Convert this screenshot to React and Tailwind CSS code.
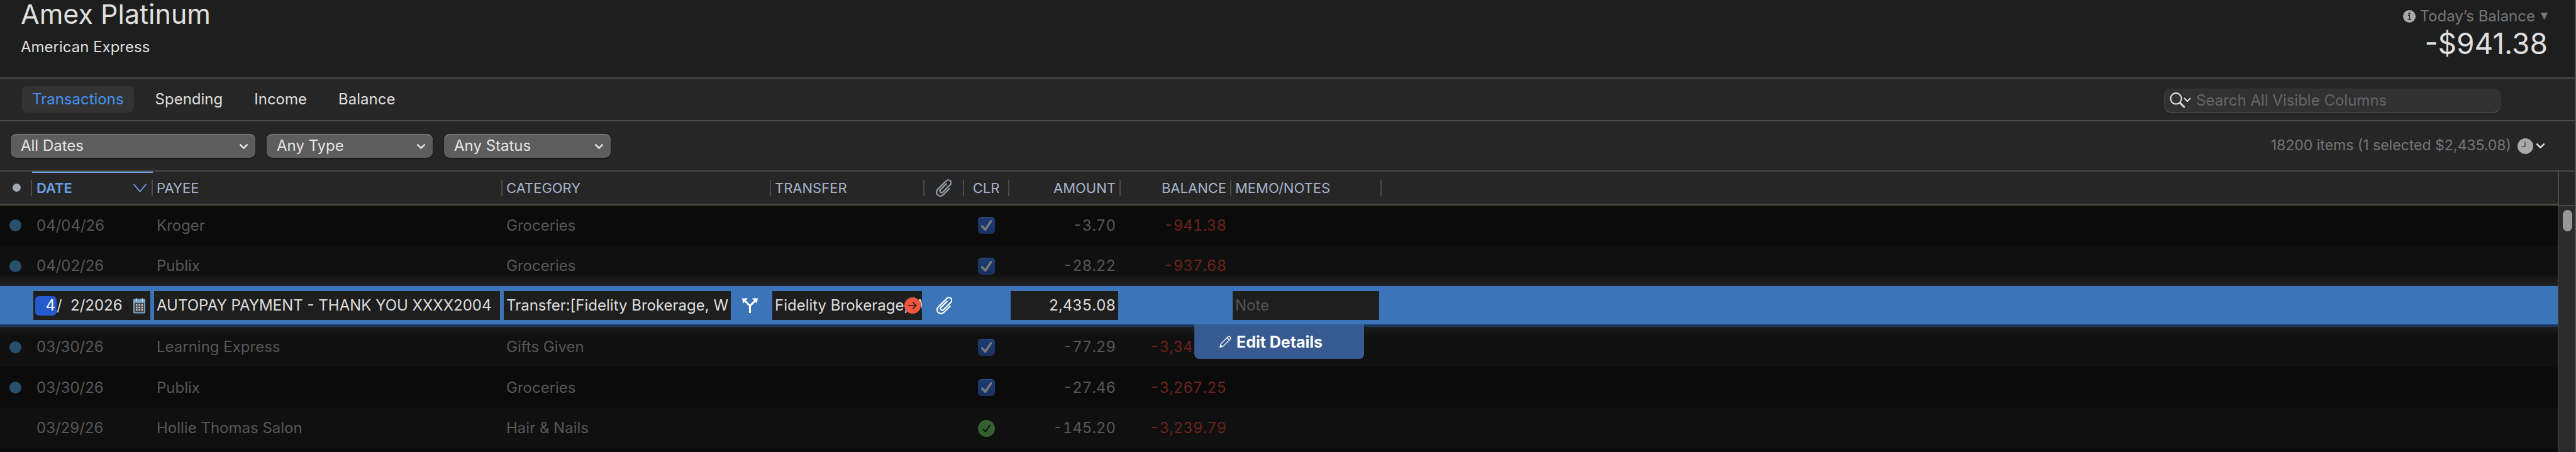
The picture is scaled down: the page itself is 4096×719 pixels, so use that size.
import { useState } from "react";

const tabs = ["Transactions", "Spending", "Income", "Balance"];

const transactions = [
  { id: 1, unread: true, date: "04/04/26", payee: "Kroger", category: "Groceries", status: "cleared", amount: "-3.70", balance: "-941.38", bg: "h-[65px] bg-[#0b0b0b] shadow-[inset_0_2px_0_#2e3620]" },
  { id: 2, unread: true, date: "04/02/26", payee: "Publix", category: "Groceries", status: "cleared", amount: "-28.22", balance: "-937.68", bg: "h-[64px] bg-[linear-gradient(to_top,#232323,#101010_20px)]" },
  { id: 3, editing: true },
  { id: 4, unread: true, date: "03/30/26", payee: "Learning Express", category: "Gifts Given", status: "cleared", amount: "-77.29", balance: "-3,344.71", bg: "h-[64px] bg-[linear-gradient(to_bottom,#1d1d1d,#101010_14px)]" },
  { id: 5, unread: true, date: "03/30/26", payee: "Publix", category: "Groceries", status: "cleared", amount: "-27.46", balance: "-3,267.25", bg: "h-[65px] bg-[#0b0b0b]" },
  { id: 6, unread: false, date: "03/29/26", payee: "Hollie Thomas Salon", category: "Hair & Nails", status: "reconciled", amount: "-145.20", balance: "-3,239.79", bg: "h-[64px] bg-[#101010]" },
];

function Chevron({ className }) {
  return (
    <svg viewBox="0 0 14 9" className={className} fill="none" stroke="currentColor" strokeWidth="2.4" strokeLinecap="round" strokeLinejoin="round">
      <path d="M2 2 L7 7 L12 2" />
    </svg>
  );
}

function ClipIcon({ className }) {
  return (
    <svg viewBox="0 0 26 29" className={className} fill="none" stroke="currentColor" strokeWidth="2.3" strokeLinecap="round" strokeLinejoin="round">
      <path d="M22.5 15.5 L12 26 A6.36 6.36 0 0 1 3 17 L17.5 2.5 A4.6 4.6 0 0 1 24 9 L11.5 21.5 A2.83 2.83 0 0 1 7.5 17.5 L17.5 7.5" />
    </svg>
  );
}

function CalendarIcon() {
  return (
    <svg viewBox="0 0 20 26" className="w-[19px] h-[25px]">
      <rect x="0" y="1.5" width="20" height="24" rx="1.5" fill="#7aa6c6" />
      <rect x="2" y="8" width="16" height="15.5" fill="#4a4a4a" />
      <rect x="4.4" y="0" width="1.4" height="6" fill="#d8d8d8" />
      <rect x="14.4" y="0" width="1.4" height="6" fill="#d8d8d8" />
      {[11, 15, 19].map((y) =>
        [4.4, 8.9, 13.4].map((x) => (
          <rect key={`${x}-${y}`} x={x} y={y - 0.5} width="2.4" height="2.4" fill="#e2e2e2" />
        ))
      )}
    </svg>
  );
}

function Select({ label, options, className }) {
  return (
    <div className={`relative ${className}`}>
      <select
        aria-label={label}
        className="w-full h-[38px] pl-4 pr-10 appearance-none rounded-[9px] bg-[#5d5d5d] text-[#e6e6e6] text-[24px] leading-[36px] shadow-[inset_0_2px_0_#747474,0_1px_2px_#111111]"
      >
        {options.map((each) => (
          <option key={each}>{each}</option>
        ))}
      </select>
      <Chevron className="absolute right-[11px] top-[15px] w-[15px] h-[10px] text-[#e6e6e6] pointer-events-none" />
    </div>
  );
}

function HeaderCell({ children, className = "font-normal", inner = "" }) {
  return (
    <th scope="col" className={`p-0 h-[53px] ${className}`}>
      <div className={`flex items-center h-[26px] border-r-2 border-[#4a4a4a] ${inner}`}>{children}</div>
    </th>
  );
}

function StatusCell({ status }) {
  const [checked, setChecked] = useState(true);
  const reconciled = status === "reconciled";
  return (
    <div className="relative mx-auto w-[27px] h-[27px]">
      <input
        type="checkbox"
        aria-label={status}
        checked={checked}
        onChange={(e) => setChecked(e.target.checked)}
        className={`block w-full h-full appearance-none ${
          reconciled
            ? "rounded-full bg-[#36602f]"
            : "rounded-[6px] bg-linear-to-b from-[#1c3c72] to-[#183160] shadow-[inset_0_1px_0_#34527f]"
        }`}
      />
      {checked && (
        <svg viewBox="0 0 28 28" className="absolute inset-0 w-full h-full pointer-events-none" fill="none" strokeLinecap="round" strokeLinejoin="round">
          {reconciled ? (
            <path d="M9 15.5 L12.5 19.5 L19.5 9" stroke="#101510" strokeWidth="2.2" />
          ) : (
            <path d="M7 15.5 L12.2 21 L21.5 7" stroke="#7b7b7b" strokeWidth="3.6" />
          )}
        </svg>
      )}
    </div>
  );
}

function TransactionRow({ row }) {
  return (
    <tr className={row.bg}>
      <td className="p-0 pl-[15px]">
        {row.unread && <span className="block w-[19px] h-[19px] rounded-full bg-[#284f6b]" />}
      </td>
      <td className="p-0 pl-[7px]">{row.date}</td>
      <td className="p-0 pl-[6px]">{row.payee}</td>
      <td className="p-0 pl-[6px]">{row.category}</td>
      <td className="p-0" />
      <td className="p-0" />
      <td className="p-0 pr-[2px]">
        <StatusCell status={row.status} />
      </td>
      <td className="p-0 pr-[8px] text-right tabular-nums">{row.amount}</td>
      <td className="p-0 pr-[8px] text-right tabular-nums text-[#6b231b]">{row.balance}</td>
      <td className="p-0" />
      <td className="p-0" />
    </tr>
  );
}

function EditingRow() {
  const field = "block w-full h-[46px] pb-[1px] bg-[#1e1e1e] text-[#dedede] outline-none";
  return (
    <tr className="h-[65px] bg-[linear-gradient(to_top,#1c3461_4px,#3b74b8_4px)]">
      <td className="p-0" />
      <td className="p-0 pt-[8px] pl-[2px] pr-[4px] align-top">
        <div className="flex items-center h-[46px] pl-[3px] pr-[8px] bg-[#1e1e1e] text-[#dedede]">
          <input aria-label="Month" defaultValue="4" className="w-[34px] h-[31px] pr-[2px] rounded-[6px] bg-[#245acb] text-right text-white outline-none" />
          <span>/</span>
          <input aria-label="Day" defaultValue="2" className="w-[28px] text-right outline-none" />
          <span>/</span>
          <input aria-label="Year" defaultValue="2026" className="w-[64px] outline-none" />
          <button aria-label="Open calendar" className="ml-auto">
            <CalendarIcon />
          </button>
        </div>
      </td>
      <td className="p-0 pt-[8px] pl-[2px] pr-[4px] align-top">
        <input aria-label="Payee" defaultValue="AUTOPAY PAYMENT - THANK YOU XXXX2004" className={`${field} pl-[4px]`} />
      </td>
      <td className="p-0 pt-[8px] pl-[2px] align-top">
        <div className="flex items-center">
          <input aria-label="Category" defaultValue="Transfer:[Fidelity Brokerage, W" className={`${field} flex-1 min-w-0 pl-[4px]`} />
          <button aria-label="Split" className="flex justify-center w-[64px] pr-[3px] text-white">
            <svg viewBox="0 0 26 25" className="w-[25px] h-[24px]">
              <path d="M0 0.5 L9.5 0.5 L1.5 9 Z M26 0.5 L16.5 0.5 L24.5 9 Z" fill="currentColor" />
              <path d="M4 4 L13 13 L22 4 M13 12 V25" fill="none" stroke="currentColor" strokeWidth="3.2" />
            </svg>
          </button>
        </div>
      </td>
      <td className="p-0 pt-[8px] pl-[2px] pr-[4px] align-top">
        <div className="relative">
          <input aria-label="Transfer" defaultValue="Fidelity Brokerage, W" className={`${field} pl-[4px]`} />
          <button aria-label="Go to transfer" className="absolute right-[2px] top-[10px]">
            <svg viewBox="0 0 27 27" className="w-[26px] h-[26px]" fill="none">
              <circle cx="13.5" cy="13.5" r="13.5" fill="#ee553e" />
              <path d="M7 13.5 H19.5 M14.5 8.5 L19.5 13.5 L14.5 18.5" stroke="#2a1a18" strokeWidth="1.7" strokeLinecap="round" strokeLinejoin="round" />
            </svg>
          </button>
        </div>
      </td>
      <td className="p-0 pb-[4px]">
        <button aria-label="Attachments" className="block mx-auto text-white">
          <ClipIcon className="w-[25px] h-[28px]" />
        </button>
      </td>
      <td className="p-0" />
      <td className="p-0 pt-[8px] pl-[2px] pr-[4px] align-top">
        <input aria-label="Amount" defaultValue="2,435.08" className={`${field} pr-[4px] text-right tabular-nums`} />
      </td>
      <td className="p-0" />
      <td className="relative p-0 pt-[8px] pl-[2px] pr-[4px] align-top">
        <input aria-label="Note" placeholder="Note" className={`${field} pl-[4px] placeholder:text-[#545454]`} />
        {/* hangs below the row, over the next one */}
        <button className="absolute right-[28px] top-[61px] z-10 flex items-center gap-[8px] w-[270px] h-[55px] pl-[40px] rounded-b-[8px] bg-[#375a90] text-white text-[25px] font-bold whitespace-nowrap">
          <svg viewBox="0 0 20 20" className="w-[19px] h-[19px]" fill="none" stroke="currentColor" strokeWidth="1.4" strokeLinejoin="round">
            <path d="M1 19 L2.5 13.5 L14.5 1.5 Q16 0.5 17.5 2 L18.2 2.7 Q19.5 4.2 18.2 5.5 L6.5 17.5 Z M12.8 3.2 L16.7 7.2" />
            <path d="M1 19 L2 15.5 L4.5 18 Z" fill="currentColor" />
          </svg>
          Edit Details
        </button>
      </td>
      <td className="p-0" />
    </tr>
  );
}

function App() {
  const [activeTab, setActiveTab] = useState("Transactions");

  return (
    <div className="flex flex-col w-full h-screen overflow-hidden border-r-2 border-[#555555] bg-[#262626] text-[#dfdfdf] text-[24px] leading-[32px] font-['Inter',sans-serif]">
      <header className="flex justify-between h-[125px] pl-[33px] pr-[43px] bg-[#1e1e1e] border-b-2 border-[#4a4a4a]">
        <div>
          <h1 className="text-[43px] leading-[44px]">Amex Platinum</h1>
          <p className="mt-[15px]">American Express</p>
        </div>
        <div className="flex flex-col items-end pt-[10px]">
          <button className="flex items-center text-[#777777]">
            <svg viewBox="0 0 21 21" className="w-[20px] h-[20px] mr-[6px]" fill="none">
              <circle cx="10.5" cy="10.5" r="10.5" fill="#a9a9a9" />
              <circle cx="10.5" cy="5.7" r="1.5" fill="#1e1e1e" />
              <path d="M8.3 9 H11 V15.5 M8 15.5 H13.5" stroke="#1e1e1e" strokeWidth="1.6" />
            </svg>
            Today’s Balance
            <svg viewBox="0 0 11 12" className="w-[11px] h-[12px] ml-[9px]">
              <path d="M0 0 H11 L5.5 12 Z" fill="currentColor" />
            </svg>
          </button>
          <p className="text-[46px] leading-[54px]">-$941.38</p>
        </div>
      </header>

      <nav className="flex items-center justify-between h-[68px] pl-[35px] pr-[118px] border-b-2 border-[#4a4a4a]">
        <div className="flex gap-[18px]">
          {tabs.map((tab) => (
            <button
              key={tab}
              onClick={() => setActiveTab(tab)}
              className={`h-[42px] px-4 rounded-[8px] ${
                activeTab === tab ? "bg-[#333333] text-[#4592f5]" : "text-[#dfdfdf]"
              }`}
            >
              {tab}
            </button>
          ))}
        </div>
        <label className="flex items-center w-[535px] h-[38px] mt-[3px] pl-[8px] rounded-[10px] border border-[#3d3d3d] border-b-[#5c5c5c] bg-[#313131]">
          <svg viewBox="0 0 35 26" className="w-[34px] h-[25px] mr-[8px] shrink-0" fill="none" stroke="#e4e4e4" strokeLinecap="round" strokeLinejoin="round">
            <circle cx="10.2" cy="10.2" r="9" strokeWidth="2.2" />
            <path d="M17 17.5 L23.5 24" strokeWidth="3" />
            <path d="M24.5 10 L29 14.8 L33.5 10" strokeWidth="2.2" />
          </svg>
          <input
            type="search"
            aria-label="Search"
            placeholder="Search All Visible Columns"
            className="flex-1 min-w-0 outline-none placeholder:text-[#666666]"
          />
        </label>
      </nav>

      <div className="flex items-center justify-between h-[80px] pl-[17px] pr-[47px] border-b-2 border-[#4a4a4a]">
        <div className="flex gap-[18px]">
          <Select label="Dates" options={["All Dates"]} className="w-[389px]" />
          <Select label="Type" options={["Any Type"]} className="w-[264px]" />
          <Select label="Status" options={["Any Status"]} className="w-[265px]" />
        </div>
        <div className="flex items-center">
          <span className="text-[23px] text-[#767676] pb-[2px]">18200 items (1 selected $2,435.08)</span>
          <button aria-label="Scheduled" className="flex items-center ml-[10px]">
            <svg viewBox="0 0 26 26" className="w-[25px] h-[25px]" fill="none">
              <circle cx="13" cy="13" r="13" fill="#a9a9a9" />
              <path d="M12.5 5.5 V13.7 H6.5" stroke="#3a3a3a" strokeWidth="1.4" />
            </svg>
            <Chevron className="ml-[4px] w-[15px] h-[10px] text-[#e6e6e6]" />
          </button>
        </div>
      </div>

      <div className="flex flex-1 min-h-0">
        <div className="flex-1 min-w-0 overflow-hidden bg-[#0b0b0b]">
          <table className="w-full table-fixed border-separate border-spacing-0 text-left text-[#575757] whitespace-nowrap">
            <colgroup>
              <col className="w-[51px]" />
              <col className="w-[192px]" />
              <col className="w-[556px]" />
              <col className="w-[427px]" />
              <col className="w-[244px]" />
              <col className="w-[63px]" />
              <col className="w-[72px]" />
              <col className="w-[177px]" />
              <col className="w-[176px]" />
              <col className="w-[239px]" />
              <col />
            </colgroup>
            <thead>
              <tr className="bg-[#262626] text-[22px] text-[#a5b4cc] [&>th]:border-b-2 [&>th]:border-[#4a4a4a]">
                <HeaderCell inner="pl-[20px]">
                  <span className="w-[13px] h-[13px] rounded-full bg-[#a3a9b3]" />
                </HeaderCell>
                <HeaderCell className="font-semibold shadow-[inset_0_2px_0_#6a9fe4]" inner="pl-[7px] pr-[8px] justify-between text-[#6a9fe4]">
                  DATE
                  <svg viewBox="0 0 22 14" className="w-[21px] h-[14px]" fill="none" stroke="currentColor" strokeWidth="1.8">
                    <path d="M0.8 0.8 L11 13 L21.2 0.8" />
                  </svg>
                </HeaderCell>
                <HeaderCell inner="pl-[6px]">PAYEE</HeaderCell>
                <HeaderCell inner="pl-[6px]">CATEGORY</HeaderCell>
                <HeaderCell inner="pl-[6px]">TRANSFER</HeaderCell>
                <HeaderCell inner="justify-center text-[#9b9fa5]">
                  <ClipIcon className="w-[25px] h-[28px]" />
                </HeaderCell>
                <HeaderCell inner="justify-center">CLR</HeaderCell>
                <HeaderCell inner="justify-end pr-[6px]">AMOUNT</HeaderCell>
                <HeaderCell inner="justify-end pr-[6px]">BALANCE</HeaderCell>
                <HeaderCell inner="pl-[6px]">MEMO/NOTES</HeaderCell>
                <th className="p-0" />
              </tr>
            </thead>
            <tbody>
              {transactions.map((row) =>
                row.editing ? <EditingRow key={row.id} /> : <TransactionRow key={row.id} row={row} />
              )}
            </tbody>
          </table>
        </div>
        <div className="flex flex-col w-[27px]">
          <div className="h-[55px] border-l-2 border-b-2 border-[#4a4a4a]" />
          <div className="flex-1 pt-[6px] pl-[6px] border-l-2 border-[#3a3a3a] bg-[#2b2b2b]">
            <div className="w-[15px] h-[34px] rounded-full bg-[#979797]" />
          </div>
        </div>
      </div>
    </div>
  );
}

export default App;
